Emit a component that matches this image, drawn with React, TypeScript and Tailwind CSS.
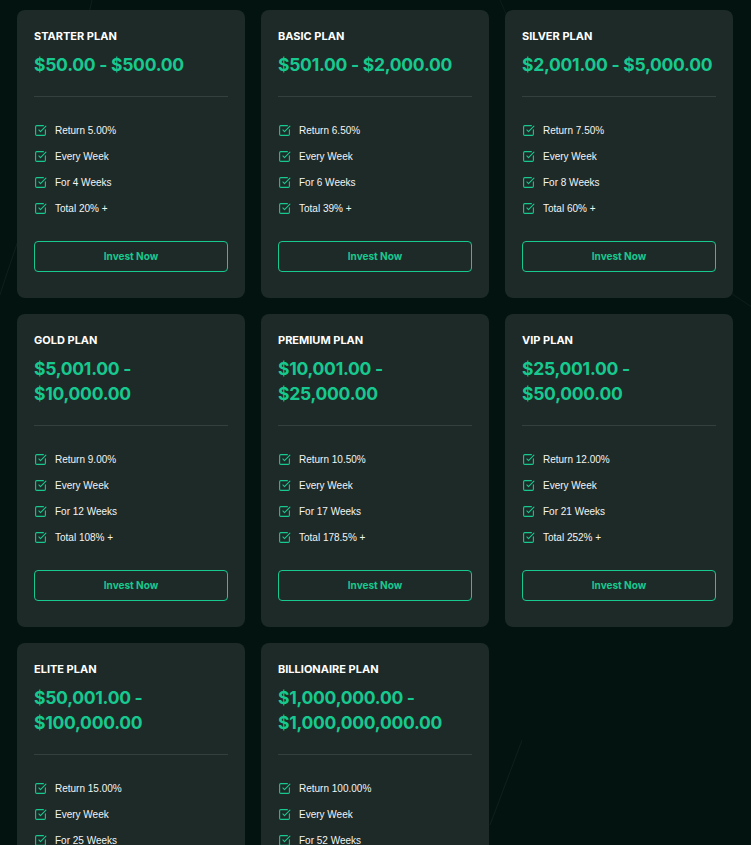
import { SquareCheckBig } from "lucide-react";

/* plan data */

interface Plan {
  name: string;
  range: string[];
  features: string[];
}

const PLANS: Plan[] = [
  { name: "Starter Plan", range: ["$50.00 - $500.00"], features: ["Return 5.00%", "Every Week", "For 4 Weeks", "Total 20% +"] },
  { name: "Basic Plan", range: ["$501.00 - $2,000.00"], features: ["Return 6.50%", "Every Week", "For 6 Weeks", "Total 39% +"] },
  { name: "Silver Plan", range: ["$2,001.00 - $5,000.00"], features: ["Return 7.50%", "Every Week", "For 8 Weeks", "Total 60% +"] },
  { name: "Gold Plan", range: ["$5,001.00 -", "$10,000.00"], features: ["Return 9.00%", "Every Week", "For 12 Weeks", "Total 108% +"] },
  { name: "Premium Plan", range: ["$10,001.00 -", "$25,000.00"], features: ["Return 10.50%", "Every Week", "For 17 Weeks", "Total 178.5% +"] },
  { name: "VIP Plan", range: ["$25,001.00 -", "$50,000.00"], features: ["Return 12.00%", "Every Week", "For 21 Weeks", "Total 252% +"] },
  { name: "Elite Plan", range: ["$50,001.00 -", "$100,000.00"], features: ["Return 15.00%", "Every Week", "For 25 Weeks", "Total 375% +"] },
  { name: "Billionaire Plan", range: ["$1,000,000.00 -", "$1,000,000,000.00"], features: ["Return 100.00%", "Every Week", "For 52 Weeks", "Total 5200% +"] },
];

function PlanCard({ plan }: { plan: Plan }) {
  return (
    <div className="flex flex-col rounded-lg bg-[#1e2a28] px-[17px] pt-[18px] pb-[26px]">
      <h3 className="font-['Inter',sans-serif] text-[11px] font-bold uppercase leading-4 text-white">
        {plan.name}
      </h3>
      <div className="mt-2 whitespace-nowrap font-['Inter',sans-serif] text-[17.5px] font-bold leading-[25px] tracking-[-0.015em] text-[#17c98f]">
        {plan.range.map((line) => (
          <div key={line}>{line}</div>
        ))}
      </div>
      <div className="mt-[19px] h-px w-full bg-[#33403d]" />
      <ul className="mt-[25px] flex flex-col gap-[10px]">
        {plan.features.map((f) => (
          <li key={f} className="flex h-4 items-center gap-2">
            <SquareCheckBig size={13} strokeWidth={2} className="shrink-0 text-[#17c98f]" />
            <span className="font-['Liberation_Sans',Arial,sans-serif] text-[10px] text-[#f2f5f3]">{f}</span>
          </li>
        ))}
      </ul>
      <button className="mt-[25px] flex h-[31px] w-full items-center justify-center rounded border border-[#17c98f] font-['Inter',sans-serif] text-[10px] font-bold text-[#17c98f]">
        Invest Now
      </button>
    </div>
  );
}

export default function App() {
  return (
    <div className="relative min-h-screen overflow-hidden bg-[#03130f]">
      {/* faint background strokes */}
      <svg className="pointer-events-none absolute inset-0 h-full w-full" viewBox="0 0 751 845" preserveAspectRatio="none">
        <path d="M92 0 C70 90 30 170 0 250" fill="none" stroke="#ffffff" strokeOpacity="0.05" strokeWidth="1" />
        <path d="M500 0 C560 120 640 200 751 260" fill="none" stroke="#ffffff" strokeOpacity="0.04" strokeWidth="1" />
        <path d="M522 628 L490 700" fill="none" stroke="#ffffff" strokeOpacity="0.05" strokeWidth="1" />
      </svg>
      <div className="relative grid grid-cols-3 items-start gap-4 pt-[10px] pl-[17px] pr-[18px] pb-10">
        {PLANS.map((p) => (
          <PlanCard key={p.name} plan={p} />
        ))}
      </div>
    </div>
  );
}
